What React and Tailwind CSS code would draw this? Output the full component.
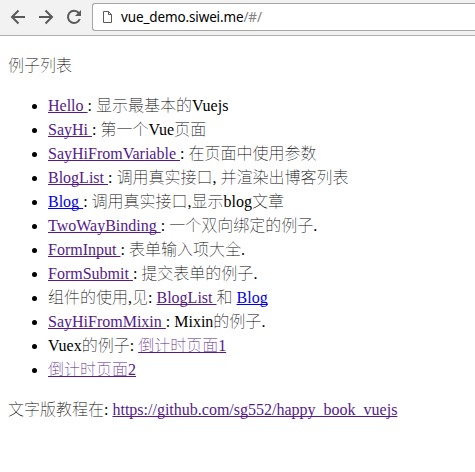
import React from "react";

function Zh({ children }) {
  return <span className="font-thin">{children}</span>;
}

function Link({ fresh, children }) {
  return (
    <a
      href="#/"
      className={
        "underline decoration-1 [text-decoration-skip-ink:none] " +
        (fresh ? "text-[#0000ee]" : "text-[#551a8b]")
      }
    >
      {children}
    </a>
  );
}

function Toolbar() {
  return (
    <header className="flex h-9 items-start border-b border-[#b0b0b0] bg-[#f2f2f2]">
      <svg className="h-[35px] w-[92px] shrink-0" viewBox="0 0 92 35" fill="none" stroke="#5a5a5a" strokeWidth="2">
        <path d="M25 17H12.5M18.5 10.5L12 17L18.5 23.5" />
        <path d="M39 17H51.5M45.5 10.5L52 17L45.5 23.5" />
        <path d="M78.8 13A6.1 6.1 0 1 0 79.8 19" />
        <path d="M81 10V16H75Z" fill="#5a5a5a" stroke="none" />
      </svg>
      <div className="mt-[3px] flex h-7 flex-1 items-center rounded-l-[3px] border border-r-0 border-[#a6a6a6] bg-white pl-[10px]">
        <svg className="h-3 w-[9px] shrink-0" viewBox="0 0 9 12" fill="none" stroke="#5a5a5a">
          <path d="M0.5 0.5H5.5L8.5 3.5V11.5H0.5ZM5.5 0.5V3.5H8.5" />
        </svg>
        <span className="ml-[9px] font-['Noto_Sans',sans-serif] text-[13.5px] leading-5 tracking-[-0.13px] text-black">
          vue_demo.siwei.me<span className="text-[#808080]">/#/</span>
        </span>
      </div>
    </header>
  );
}

export default function App() {
  return (
    <div className="h-[472px] overflow-hidden bg-white font-['Liberation_Serif','Noto_Sans_CJK_SC',serif] text-base leading-6 whitespace-nowrap text-black">
      <Toolbar />
      <main className="px-2 pt-[18px]">
        <p><Zh>例子列表</Zh></p>
        <ul className="my-4 list-disc pl-10">
          <li><Link>Hello </Link>: <Zh>显示最基本的</Zh>Vuejs</li>
          <li><Link>SayHi </Link>: <Zh>第一个</Zh>Vue<Zh>页面</Zh></li>
          <li><Link>SayHiFromVariable </Link>: <Zh>在页面中使用参数</Zh></li>
          <li><Link>BlogList </Link>: <Zh>调用真实接口</Zh>, <Zh>并渲染出博客列表</Zh></li>
          <li><Link fresh>Blog </Link>: <Zh>调用真实接口</Zh>,<Zh>显示</Zh>blog<Zh>文章</Zh></li>
          <li><Link>TwoWayBinding </Link>: <Zh>一个双向绑定的例子</Zh>.</li>
          <li><Link>FormInput </Link>: <Zh>表单输入项大全</Zh>.</li>
          <li><Link>FormSubmit </Link>: <Zh>提交表单的例子</Zh>.</li>
          <li><Zh>组件的使用</Zh>,<Zh>见</Zh>: <Link>BlogList </Link><Zh>和</Zh> <Link fresh>Blog</Link></li>
          <li><Link>SayHiFromMixin </Link>: Mixin<Zh>的例子</Zh>.</li>
          <li>Vuex<Zh>的例子</Zh>: <Link><Zh>倒计时页面</Zh>1</Link></li>
          <li><Link><Zh>倒计时页面</Zh>2</Link></li>
        </ul>
        <p><Zh>文字版教程在</Zh>: <Link>https://github.com/sg552/happy_book_vuejs</Link></p>
      </main>
    </div>
  );
}
